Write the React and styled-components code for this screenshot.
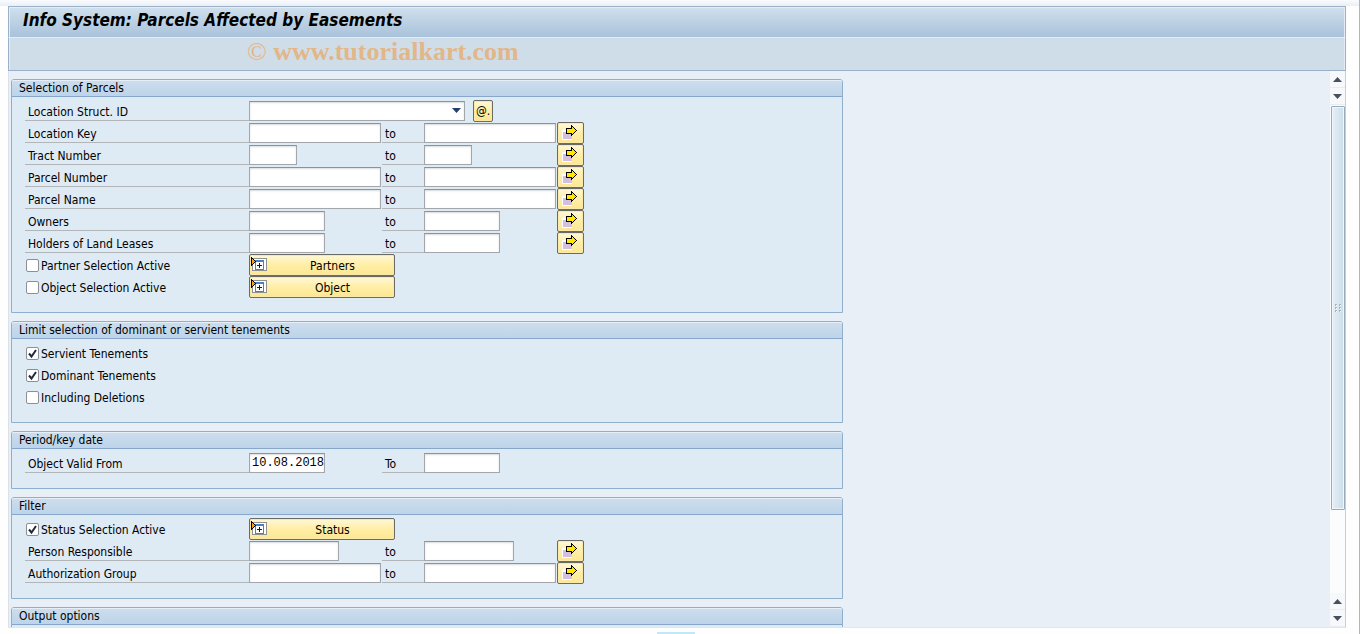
import { useId } from 'react';
import styled, { createGlobalStyle } from 'styled-components';

const GlobalStyle = createGlobalStyle`
  * {
    box-sizing: border-box;
  }

  body {
    margin: 0;
    background: #fefefe;
    color: #000;
    font-family: 'DejaVu Sans Condensed', 'Liberation Sans', sans-serif;
    font-size: 12px;
  }

  button,
  input,
  select {
    margin: 0;
    font: inherit;
    color: inherit;
  }
`;

const Page = styled.div`
  display: flex;
  flex-direction: column;
  height: 100vh;
  overflow: hidden;
  border-right: 1px solid #b4b4b4;
`;

const TopEdge = styled.div`
  flex: none;
  height: 6px;
  background: linear-gradient(#fafbfd, #eaeff6);
`;

const Window = styled.main`
  flex: 1;
  min-height: 0;
  display: flex;
  flex-direction: column;
  margin: 0 13px 0 8px;
  border-bottom: 1px solid #e3e6ec;
`;

const TitleBar = styled.header`
  flex: none;
  height: 31px;
  padding: 0 14px;
  border: 1px solid #9ab1c9;
  border-bottom: 0;
  box-shadow: inset 1px 1px #e4edf5, inset -1px 0 #e4edf5;
  background: linear-gradient(#d0e0ec, #a9c2db);
`;

const Title = styled.h1`
  margin: 0;
  font-size: 17px;
  line-height: 27px;
  font-weight: bold;
  font-style: italic;
  white-space: nowrap;
`;

const Toolbar = styled.div`
  flex: none;
  height: 34px;
  padding-left: 238px;
  border: 1px solid #9ab1c9;
  border-top-color: #e4edf5;
  box-shadow: inset 1px 0 #e4edf5, inset -1px 0 #e4edf5;
  background: #cfdde8;
`;

const Watermark = styled.span`
  color: #e3b688;
  font-family: 'Liberation Serif', serif;
  font-size: 26px;
  line-height: 28px;
  white-space: nowrap;
`;

const Body = styled.div`
  flex: 1;
  min-height: 0;
  display: flex;
  border-left: 1px solid #d9e1ea;
  border-right: 1px solid #c6cede;
  background: #e8eff7;
`;

const Content = styled.form`
  flex: 1;
  display: flex;
  flex-direction: column;
  gap: 8px;
  padding: 8px 2px 0;
  overflow: hidden;
`;

const Group = styled.section`
  flex: none;
  width: 100%;
  max-width: 832px;
  padding-bottom: 14px;
  border: 1px solid #8fafcd;
  border-radius: 3px 3px 0 0;
  background: #deeaf4;
`;

const GroupTitle = styled.h2`
  height: 17px;
  margin: 0 0 3px;
  padding-left: 7px;
  border-bottom: 1px solid #86a7c9;
  border-radius: 2px 2px 0 0;
  box-shadow: inset 0 1px #e6eff8;
  background: linear-gradient(#cdddec, #bdd4ea);
  font-size: 12px;
  line-height: 16px;
  font-weight: normal;
`;

const Row = styled.div`
  display: flex;
  height: 22px;
  padding-left: 13px;
`;

const Label = styled.label`
  width: ${({ $short }) => ($short ? '42px' : '224px')};
  height: 21px;
  padding-left: 3px;
  border-bottom: 1px solid #b3b6b9;
  line-height: 24px;
  white-space: nowrap;
`;

const CheckCell = styled.div`
  display: flex;
  align-items: flex-start;
  gap: 2px;
  width: 224px;
  padding-left: 1px;
  line-height: 24px;
  white-space: nowrap;
`;

const Checkbox = styled.input`
  appearance: none;
  width: 13px;
  height: 13px;
  margin-top: 5px;
  border: 1px solid #8c9096;
  border-radius: 2px;
  background: #fff;

  &:checked {
    background: #fff
      url("data:image/svg+xml,%3Csvg xmlns='http://www.w3.org/2000/svg' viewBox='0 0 11 11'%3E%3Cpath d='M2 5.5L4.5 8.5L9 2' fill='none' stroke='%23222b3c' stroke-width='2'/%3E%3C/svg%3E");
  }
`;

const Slot = styled.div`
  width: 133px;
`;

const Field = styled.input`
  display: block;
  width: ${({ $width }) => $width}px;
  height: 20px;
  margin-top: 1px;
  padding: 0 0 0 2px;
  border: 1px solid #a3a6ab;
  border-top-color: #8e9196;
  border-radius: 0;
  box-shadow: inset 0 1px 2px #d9dbde;
  background: #fff;
  font-family: 'Liberation Mono', monospace;
`;

const SelectBox = styled.div`
  position: relative;
  margin: 1px 8px 0 0;

  svg {
    position: absolute;
    top: 7px;
    right: 4px;
    pointer-events: none;
  }
`;

const Select = styled.select`
  appearance: none;
  display: block;
  width: 216px;
  height: 20px;
  padding: 0 16px 0 3px;
  border: 1px solid #a3a6ab;
  border-top-color: #8e9196;
  border-radius: 0;
  box-shadow: inset 0 1px 2px #d9dbde;
  background: #fff;
`;

const Button = styled.button`
  display: flex;
  align-items: center;
  justify-content: center;
  width: ${({ $width }) => $width}px;
  height: 22px;
  padding: 0;
  border: 1px solid #6a6a66;
  border-radius: 2px;
  box-shadow: inset 0 0 0 1px #fbe9a8;
  background: linear-gradient(#fff8d8, #ffeea6 50%, #fce791);
`;

const ButtonText = styled.span`
  flex: 1;
  padding: 2px 0 0 4px;
  text-align: center;
`;

const Scrollbar = styled.div`
  flex: none;
  display: flex;
  flex-direction: column;
  width: 15px;
  background: #fbfcfd;
`;

const ScrollButton = styled.button`
  flex: none;
  display: grid;
  place-items: center;
  height: 17px;
  padding: 0;
  border: 0;
  border-bottom: 1px solid #e9ecf1;
  background: #f6f8fc;
`;

const Track = styled.div`
  flex: 1;
  padding-top: 1px;
`;

const Thumb = styled.div`
  display: grid;
  place-items: center;
  height: 83%;
  margin-left: 1px;
  border: 1px solid #98aabb;
  border-radius: 1px;
  box-shadow: inset 0 0 0 1px #f0f6fb;
  background: linear-gradient(to right, #e6eff6, #cbdeeb);
`;

const Footer = styled.footer`
  flex: none;
  display: flex;
  align-items: flex-end;
  justify-content: center;
  height: 6px;
  padding-right: 7px;
`;

const FooterMark = styled.div`
  width: 38px;
  height: 2px;
  background: #bdeaf6;
`;

function ArrowIcon() {
  return (
    <svg width="17" height="16" viewBox="0 0 17 16" shapeRendering="crispEdges">
      <path d="M0 5h10v10H0z" fill="#fff" />
      <path d="M1 7h9v7H1z" fill="#d3bfe0" />
      <path
        d="M9 0h1v1h1v1h1v1h1v1h1v1h1v1h-1v1h-1v1h-1v1h-1v1h-1v1H9V9H4V3h5z"
        fill="#000"
      />
      <path d="M10 2h1v1h1v1h1v1h1v1h-1v1h-1v1h-1v1h-1V8H5V4h5z" fill="#ffe600" />
    </svg>
  );
}

function ExpandIcon() {
  return (
    <svg width="17" height="18" viewBox="0 0 17 18" shapeRendering="crispEdges">
      <path d="M2 2h15v13H2z" fill="#8f9295" />
      <path d="M3 3h13v11H3z" fill="#fff" />
      <path d="M5 4h9v10H5z" fill="#4d7ebf" />
      <path d="M6 6h7v7H6z" fill="#fff" />
      <path d="M7 9h5v1H7zM9 7h1v5H9z" fill="#0a0a8c" />
      <path d="M1 1h1v1h1v1h1v1h1v1h1v1H5v1H4v1H3v1H2v1H1z" fill="#000" />
      <path d="M2 3h1v1h1v1h1v1H4v1H3v1H2z" fill="#ff9d0a" />
    </svg>
  );
}

function Triangle({ down, color = '#46525f' }) {
  return (
    <svg width="9" height="5" viewBox="0 0 9 5">
      <path d={down ? 'M0 0h9L4.500 5z' : 'M0 5h9L4.500 0z'} fill={color} />
    </svg>
  );
}

function RangeRow({ label, width = 132, toWidth = width, to = 'to', value, more = true }) {
  const id = useId();

  return (
    <Row>
      <Label htmlFor={id}>{label}</Label>
      <Slot>
        <Field id={id} $width={width} defaultValue={value} />
      </Slot>
      <Label $short htmlFor={`${id}-to`}>
        {to}
      </Label>
      <Slot>
        <Field id={`${id}-to`} $width={toWidth} />
      </Slot>
      {more && (
        <Button type="button" $width={27} aria-label={`Multiple selection: ${label}`}>
          <ArrowIcon />
        </Button>
      )}
    </Row>
  );
}

function CheckRow({ label, checked, action }) {
  const id = useId();

  return (
    <Row>
      <CheckCell>
        <Checkbox type="checkbox" id={id} defaultChecked={checked} />
        <label htmlFor={id}>{label}</label>
      </CheckCell>
      {action && (
        <Button type="button" $width={146}>
          <ExpandIcon />
          <ButtonText>{action}</ButtonText>
        </Button>
      )}
    </Row>
  );
}

function LocationRow() {
  const id = useId();

  return (
    <Row>
      <Label htmlFor={id}>Location Struct. ID</Label>
      <SelectBox>
        <Select id={id}>
          <option></option>
        </Select>
        <Triangle down color="#263c70" />
      </SelectBox>
      <Button type="button" $width={20}>
        @.
      </Button>
    </Row>
  );
}

export default function App() {
  return (
    <Page>
      <GlobalStyle />
      <TopEdge />
      <Window>
        <TitleBar>
          <Title>Info System: Parcels Affected by Easements</Title>
        </TitleBar>
        <Toolbar>
          <Watermark>
            © <b>www.tutorialkart.com</b>
          </Watermark>
        </Toolbar>

        <Body>
          <Content>
            <Group>
              <GroupTitle>Selection of Parcels</GroupTitle>
              <LocationRow />
              <RangeRow label="Location Key" />
              <RangeRow label="Tract Number" width={48} />
              <RangeRow label="Parcel Number" />
              <RangeRow label="Parcel Name" />
              <RangeRow label="Owners" width={76} />
              <RangeRow label="Holders of Land Leases" width={76} />
              <CheckRow label="Partner Selection Active" action="Partners" />
              <CheckRow label="Object Selection Active" action="Object" />
            </Group>

            <Group>
              <GroupTitle>Limit selection of dominant or servient tenements</GroupTitle>
              <CheckRow label="Servient Tenements" checked />
              <CheckRow label="Dominant Tenements" checked />
              <CheckRow label="Including Deletions" />
            </Group>

            <Group>
              <GroupTitle>Period/key date</GroupTitle>
              <RangeRow
                label="Object Valid From"
                to="To"
                width={76}
                value="10.08.2018"
                more={false}
              />
            </Group>

            <Group>
              <GroupTitle>Filter</GroupTitle>
              <CheckRow label="Status Selection Active" checked action="Status" />
              <RangeRow label="Person Responsible" width={90} />
              <RangeRow label="Authorization Group" />
            </Group>

            <Group>
              <GroupTitle>Output options</GroupTitle>
            </Group>
          </Content>

          <Scrollbar>
            <ScrollButton type="button" aria-label="Scroll up">
              <Triangle />
            </ScrollButton>
            <ScrollButton type="button" aria-label="Scroll down">
              <Triangle down />
            </ScrollButton>
            <Track>
              <Thumb>
                <svg width="7" height="9" viewBox="0 0 7 9" shapeRendering="crispEdges">
                  <path d="M0 0h2v2H0zM4 0h2v2H4zM0 3h2v2H0zM4 3h2v2H4zM0 6h2v2H0zM4 6h2v2H4z" fill="#a5b4c2" />
                  <path d="M1 1h1v1H1zM5 1h1v1H5zM1 4h1v1H1zM5 4h1v1H5zM1 7h1v1H1zM5 7h1v1H5z" fill="#fff" />
                </svg>
              </Thumb>
            </Track>
            <ScrollButton type="button" aria-label="Page up">
              <Triangle />
            </ScrollButton>
            <ScrollButton type="button" aria-label="Page down">
              <Triangle down />
            </ScrollButton>
          </Scrollbar>
        </Body>
      </Window>
      <Footer>
        <FooterMark />
      </Footer>
    </Page>
  );
}
